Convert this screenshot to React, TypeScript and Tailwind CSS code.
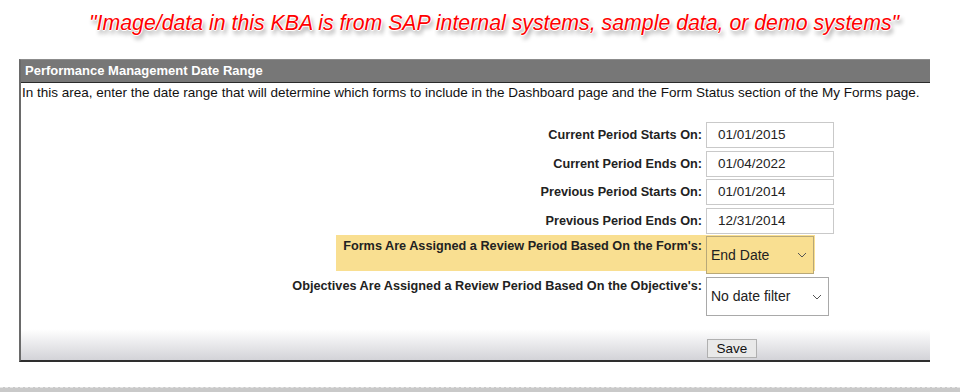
import { ReactNode } from "react";

function Chevron() {
  return (
    <svg width="10" height="6" viewBox="0 0 10 6" fill="none" className="shrink-0">
      <path d="M1 1l4 4 4-4" stroke="#555" strokeWidth="1" />
    </svg>
  );
}

function DateRow({ label, value, className = "" }: { label: string; value: string; className?: string }) {
  return (
    <div className={`flex ${className}`}>
      <div className="w-[685px] pr-[4px] text-right text-[12.7px] font-bold text-[#222] leading-[26px]">{label}</div>
      <div className="w-[128px] h-[26px] border border-[#c9c9c9] bg-white pl-[11px] text-[13.5px] text-[#222] leading-[24px]">
        {value}
      </div>
    </div>
  );
}

function Select({ value, className = "" }: { value: string; className?: string }): ReactNode {
  return (
    <div
      className={`flex items-center justify-between border border-[#a9a9a9] pl-[4px] pr-[6px] text-[14px] text-[#222] ${className}`}
    >
      <span>{value}</span>
      <Chevron />
    </div>
  );
}

export default function App() {
  return (
    <div className="w-[960px] h-[392px] bg-white overflow-hidden flex flex-col font-['Liberation_Sans',Arial,sans-serif]">
      {/* disclaimer */}
      <div className="h-[59px] pl-[89px] pt-[11px]">
        <p className="text-[21.3px] italic text-[#ff0000] leading-[24px] whitespace-nowrap [text-shadow:1px_0_0_#fff,-1px_0_0_#fff,0_1px_0_#fff,0_-1px_0_#fff,2px_4px_4px_rgba(0,0,0,0.45)]">
          "Image/data in this KBA is from SAP internal systems, sample data, or demo systems"
        </p>
      </div>

      {/* panel */}
      <div className="ml-[19px] w-[911px] border-t border-[#8c8c8c] border-l-2 border-l-[#6a6a6a] border-b-2 border-b-[#2e2e2e]">
        <div className="h-[23px] bg-[#777] border-b border-[#2a2a2a] flex items-center pl-[4px] text-[13px] font-bold text-white">
          Performance Management Date Range
        </div>
        <div className="pl-[1px] pt-[2px] text-[13.5px] leading-[16px] text-[#111] whitespace-nowrap">
          In this area, enter the date range that will determine which forms to include in the Dashboard page and the Form Status section of the My Forms page.
        </div>

        <div className="mt-[21px] flex flex-col">
          <DateRow label="Current Period Starts On:" value="01/01/2015" />
          <DateRow label="Current Period Ends On:" value="01/04/2022" className="mt-[3px]" />
          <DateRow label="Previous Period Starts On:" value="01/01/2014" className="mt-[2px]" />
          <DateRow label="Previous Period Ends On:" value="12/31/2014" className="mt-[3px]" />

          <div className="mt-[1px] ml-[315px] w-[479px] h-[36px] bg-[#f9df91] flex">
            <div className="w-[370px] pr-[4px] pt-[4px] text-right text-[12.7px] font-bold text-[#222] leading-[15px] whitespace-nowrap">
              Forms Are Assigned a Review Period Based On the Form's:
            </div>
            <Select value="End Date" className="w-[108px] h-[38px] mt-[1px] bg-[#f9df91] border-[#b8a878]" />
          </div>

          <div className="mt-[6px] flex">
            <div className="w-[685px] pr-[4px] pt-[2px] text-right text-[12.7px] font-bold text-[#222] leading-[15px]">
              Objectives Are Assigned a Review Period Based On the Objective's:
            </div>
            <Select value="No date filter" className="w-[123px] h-[39px] bg-white" />
          </div>
        </div>

        <div className="h-[44px] bg-gradient-to-b from-white from-[30%] to-[#d3d3d8] pt-[20px]">
          <button className="ml-[686px] w-[50px] h-[19px] bg-[#e9e9e9] border border-[#b0b0b0] text-[13.5px] text-[#111] leading-[17px] font-['Liberation_Sans',Arial,sans-serif]">
            Save
          </button>
        </div>
      </div>

      <div className="flex-1" />
      <div className="h-[5px] bg-[#c9c9c9] border-t border-dashed border-[#e6e6e6]" />
    </div>
  );
}
